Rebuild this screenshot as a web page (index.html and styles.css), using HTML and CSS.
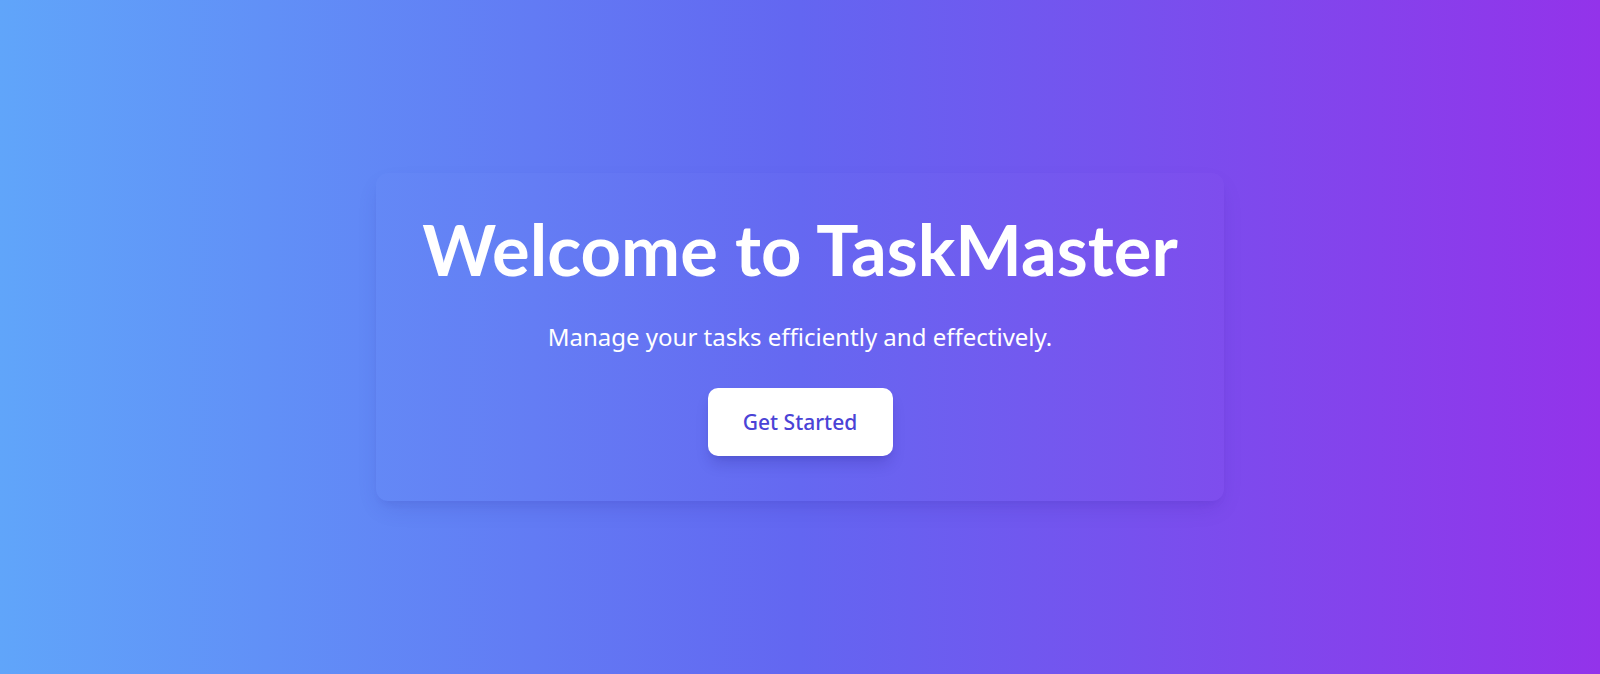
FILE: index.html
```html
<!DOCTYPE html>
<html lang="en">
<head>
<meta charset="utf-8">
<title>TaskMaster</title>
<link rel="stylesheet" href="styles.css">
</head>
<body>
<main class="hero">
  <div class="container">
    <section class="card">
      <h1 class="title">Welcome to TaskMaster</h1>
      <p class="subtitle">Manage your tasks efficiently and effectively.</p>
      <a class="btn" href="#">Get Started</a>
    </section>
  </div>
</main>
</body>
</html>
```
FILE: styles.css
```css
* { box-sizing: border-box; }
html, body { margin: 0; padding: 0; }
body {
  font-family: "Noto Sans", "Open Sans", sans-serif;
  color: #fff;
}
.hero {
  min-height: 674px;
  height: 100vh;
  display: flex;
  align-items: center;
  justify-content: center;
  background: linear-gradient(to right, #60a5fa 0%, #6366f1 50%, #9333ea 100%);
}
.container {
  width: 100%;
  max-width: 896px;
  padding: 0 24px;
}
.card {
  display: flex;
  flex-direction: column;
  align-items: center;
  text-align: center;
  padding: 41px 32px 45px;
  border-radius: 12px;
  background: rgba(255, 255, 255, 0.015);
  box-shadow: 0 10px 25px -5px rgba(30, 20, 120, 0.12), 0 6px 10px -6px rgba(30, 20, 120, 0.1);
}
.title {
  margin: 0;
  font-family: "Lato", "Noto Sans", sans-serif;
  font-weight: 700;
  font-size: 70.5px;
  line-height: 1;
  white-space: nowrap;
  color: #fff;
}
.subtitle {
  margin: 37px 0 0;
  font-size: 24px;
  line-height: 32px;
  color: #fff;
}
.btn {
  margin-top: 35px;
  display: inline-block;
  width: 185px;
  padding: 20px 0;
  font-size: 21px;
  line-height: 28px;
  font-weight: 500;
  color: #4b43d6;
  background: #fff;
  border-radius: 10px;
  text-decoration: none;
  box-shadow: 0 10px 15px -3px rgba(30, 20, 120, 0.2), 0 4px 6px -4px rgba(30, 20, 120, 0.15);
}
```
